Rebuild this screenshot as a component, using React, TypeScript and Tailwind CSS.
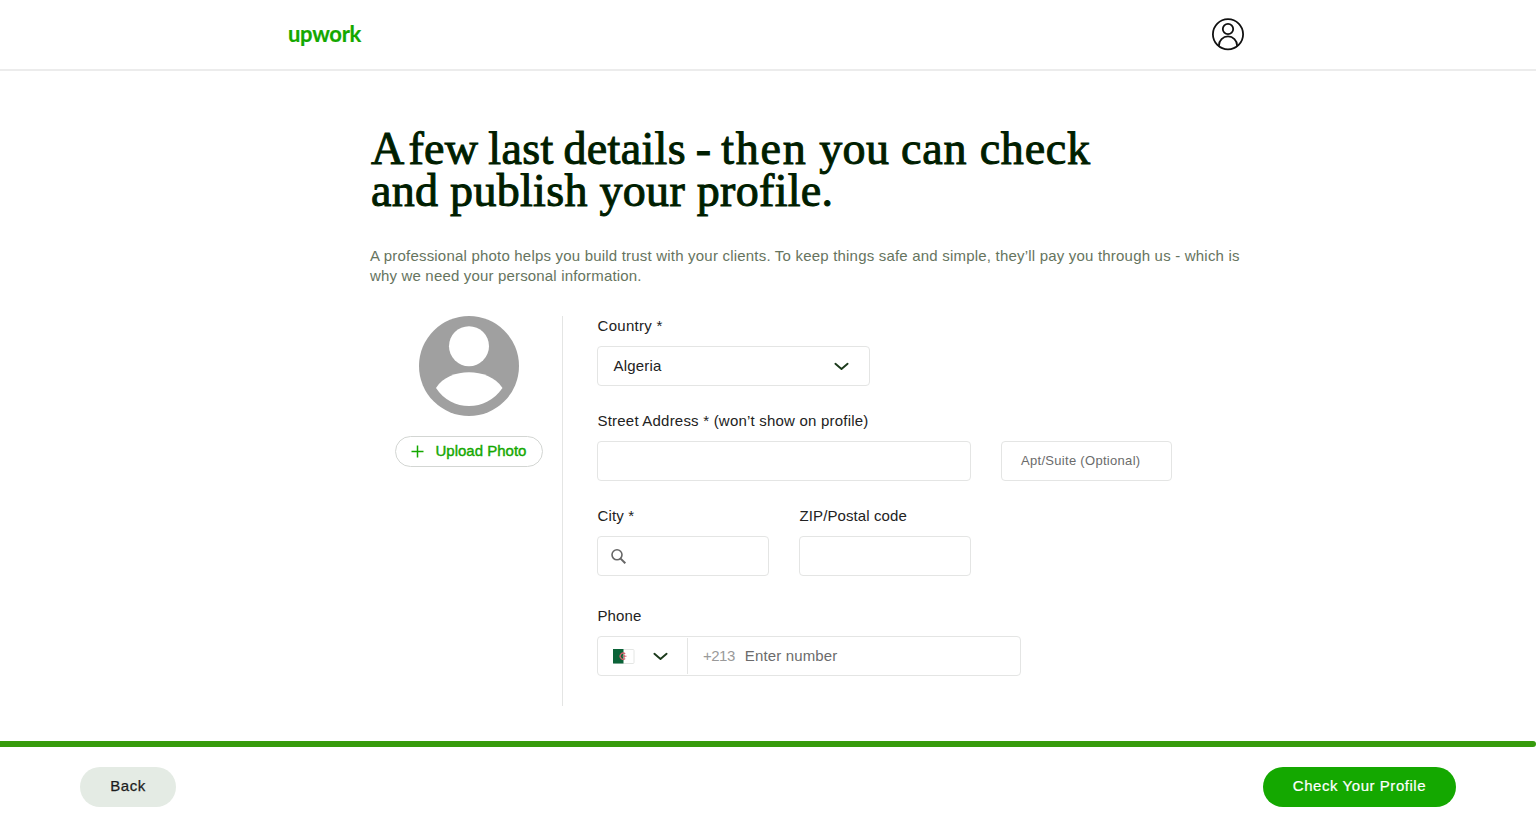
import type { ReactNode } from 'react';

function UserIcon() {
  return (
    <svg className="block size-8 overflow-visible" viewBox="0 0 32 32" fill="none" stroke="#111" strokeWidth="1.8">
      <circle cx="16" cy="16.300" r="15.100" />
      <circle cx="16" cy="11" r="5.200" />
      <path d="M6.900 28.200v-.7a9.100 9.100 0 0 1 18.200 0v.7" />
    </svg>
  );
}

function Logo() {
  return (
    <span className="block h-[30px] w-[76px] pl-px whitespace-nowrap font-[Lato,sans-serif] text-[22px] leading-[30px] font-bold tracking-[-0.3px] text-[#14a800] [-webkit-text-stroke:0.2px_#14a800]">
      upwork
    </span>
  );
}

function Avatar() {
  return (
    <svg className="block size-[100px]" viewBox="0 0 100 100">
      <circle cx="50" cy="50" r="50" fill="#a0a0a0" />
      <circle cx="50" cy="30.200" r="20" fill="#fff" />
      <path d="M17 72C24 61 37 56.300 50 56.300S76 61 83.500 72C75 84 63 90 50 90S25 84 17 72Z" fill="#fff" />
    </svg>
  );
}

function Chevron() {
  return (
    <svg className="block h-2 w-[15px]" viewBox="0 0 15 8" fill="none" stroke="#1b3a1b" strokeWidth="1.900" strokeLinecap="round" strokeLinejoin="round">
      <path d="M1.400 1.800 7.500 7l6.100-5.200" />
    </svg>
  );
}

function Flag() {
  return (
    <svg className="block h-[15px] w-[22px]" viewBox="0 0 22 15">
      <rect x=".5" y=".5" width="20.500" height="14" rx="1" fill="#fff" stroke="#e4e6e4" />
      <path d="M0 0h10.500v14.500H0z" fill="#0b6338" />
      <path d="M12.200 4.800a3.100 3.100 0 1 0 0 4.800" fill="none" stroke="#d0606c" strokeWidth="1.300" />
      <path d="M9.500 7.200h4M11.300 5.600v3.200" stroke="#d0606c" strokeWidth="1" />
    </svg>
  );
}

function Label({ children }: { children: ReactNode }) {
  return <div className="h-5 pl-[0.5px] leading-5 whitespace-nowrap text-[#222]">{children}</div>;
}

const box = 'flex h-10 items-center rounded-[4px] border border-[#e4e5e4] bg-white';

export default function App() {
  return (
    <div className="flex h-[826px] flex-col overflow-hidden bg-white font-['Liberation_Sans',Arial,sans-serif] text-[15px] text-[#222]">
      <header className="flex h-[71px] shrink-0 items-start justify-between border-b-2 border-[#ececec] pr-[292px] pl-[287px]">
        <div className="pt-[19px]"><Logo /></div>
        <div className="pt-[18px]"><UserIcon /></div>
      </header>

      <main className="flex h-[670px] shrink-0 flex-col pl-[370px]">
        <h1 className="mt-[57px] whitespace-nowrap font-['Liberation_Serif',serif] text-[46px] leading-[42px] text-[#001e00] [-webkit-text-stroke:1px_#001e00]">
          <span className="block pl-px tracking-[0.35px]">
            <span className="mr-[-8px]">A</span>{' '}
            <span className="[word-spacing:-2px]">few last details - </span>
            <span className="tracking-[1.7px]">then</span> you{' '}
            <span className="tracking-[0.8px]">can check</span>
          </span>
          <span className="block pl-px tracking-[0.3px]">and publish your profile.</span>
        </h1>
        <p className="mt-[34px] leading-5 whitespace-nowrap text-[#66745e]">
          <span className="block tracking-[0.2px]">A professional photo helps you build trust with your clients. To keep things safe and simple, they’ll pay you through us - which is</span>
          <span className="block tracking-[0.17px]">why we need your personal information.</span>
        </p>

        <div className="mt-[30px] flex">
          <section className="flex h-[390px] w-[193px] flex-col items-center border-r border-[#e4e5e4] pl-[5px]">
            <Avatar />
            <button className="mt-5 flex h-[31px] w-[148px] items-center rounded-full border border-[#d3d6d3] pl-[15px] whitespace-nowrap text-[#14a800]">
              <svg className="mr-3 size-[13px]" viewBox="0 0 13 13" stroke="#14a800" strokeWidth="1.500">
                <path d="M6.500.5v12M.5 6.500h12" />
              </svg>
              <span className="[-webkit-text-stroke:0.4px_#14a800]">Upload Photo</span>
            </button>
          </section>

          <form className="flex flex-col pl-[34px]">
            <Label><span className="tracking-[0.3px]">Country *</span></Label>
            <div className={`${box} mt-[10px] w-[273px] justify-between pr-5 pl-[15px]`}>
              <span className="pl-[0.5px] tracking-[0.2px]">Algeria</span>
              <Chevron />
            </div>

            <div className="mt-[25px]"><Label><span className="tracking-[0.21px]">Street Address * (won’t show on profile)</span></Label></div>
            <div className="mt-[10px] flex gap-[30px]">
              <div className={`${box} w-[374px]`} />
              <div className={`${box} w-[171px] pl-[19px] text-[13px] text-[#6b6b6b]`}>
                <span className="tracking-[0.3px]">Apt/Suite (Optional)</span>
              </div>
            </div>

            <div className="mt-[25px] flex gap-[30px]">
              <div className="w-[172px]">
                <Label><span className="tracking-[0.15px]">City *</span></Label>
                <div className={`${box} mt-[10px] pl-[13px]`}>
                  <svg className="size-[15px]" viewBox="0 0 15 15" fill="none" stroke="#666" strokeWidth="1.600">
                    <circle cx="6" cy="5.800" r="5" />
                    <path d="m9.600 9.600 4.700 4.700" strokeWidth="2" />
                  </svg>
                </div>
              </div>
              <div className="w-[172px]">
                <Label><span className="tracking-[0.1px]">ZIP/Postal code</span></Label>
                <div className={`${box} mt-[10px]`} />
              </div>
            </div>

            <div className="mt-[30px]"><Label><span className="tracking-[0.1px]">Phone</span></Label></div>
            <div className={`${box} mt-[10px] w-[424px]`}>
              <div className="flex h-9 w-[90px] items-center gap-[18px] border-r border-[#e4e5e4] pl-[15px]">
                <Flag />
                <Chevron />
              </div>
              <span className="ml-[15px] tracking-[-0.5px] text-[#9a9a9a]">+213</span>
              <span className="ml-[10px] tracking-[0.15px] text-[#6b6b6b]">Enter number</span>
            </div>
          </form>
        </div>
      </main>

      <footer className="shrink-0">
        <div className="h-[6px] rounded-r-full bg-[#369b0c]" />
        <div className="flex justify-between px-20 pt-5">
          <button className="h-10 w-24 rounded-full bg-[#e4ebe4] pb-[2px] text-[#1c1c1c] [-webkit-text-stroke:0.25px_#1c1c1c]">
            <span className="tracking-[0.5px]">Back</span>
          </button>
          <button className="h-10 w-[193px] rounded-full bg-[#14a800] pb-[2px] whitespace-nowrap text-white [-webkit-text-stroke:0.2px_#fff]">
            <span className="tracking-[0.55px]">Check Your Profile</span>
          </button>
        </div>
      </footer>
    </div>
  );
}
